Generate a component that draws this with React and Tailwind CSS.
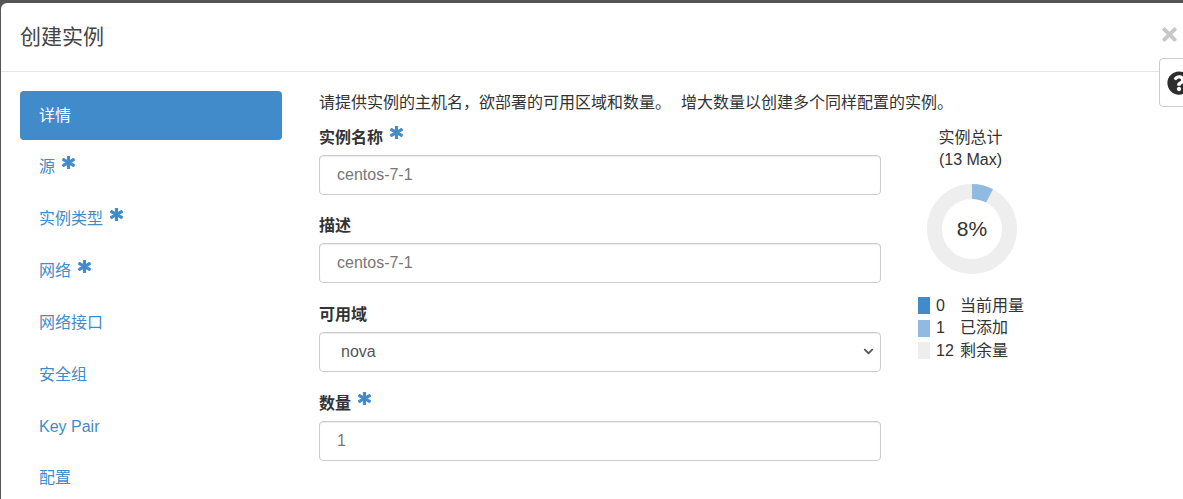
import React from "react";
import { FaAsterisk, FaTimes, FaQuestionCircle, FaChevronDown } from "react-icons/fa";

const font = "font-['Liberation_Sans','Noto_Sans_CJK_SC',sans-serif]";

const navItems = [
  { label: "详情", active: true },
  { label: "源", required: true },
  { label: "实例类型", required: true },
  { label: "网络", required: true },
  { label: "网络接口" },
  { label: "安全组" },
  { label: "Key Pair" },
  { label: "配置" },
];

function Star({ className }) {
  return (
    <FaAsterisk
      stroke="currentColor"
      strokeWidth={40}
      className={`inline-block text-[#428bca] text-[13px] ${className}`}
    />
  );
}

function Field({ label, required, value, select }) {
  return (
    <div className="mb-[19.7px]">
      <div className="h-[24px] mb-[5px] flex items-center gap-[6.5px] text-[16px] font-bold text-[#333] leading-[24px]">
        <span>{label}</span>
        {required && <Star className="-mt-[10px]" />}
      </div>
      <div
        className={`h-[40px] w-[562px] border border-[#ccc] rounded-[4px] bg-white flex items-center justify-between text-[16px] shadow-[inset_0_1px_1px_rgba(0,0,0,0.075)] ${select ? "pl-[21px] pr-[5px] text-[#555]" : "pl-[17px] text-[#777]"}`}
      >
        <span className={select ? "pt-[1px]" : ""}>{value}</span>
        {select && <FaChevronDown className="text-[#555] text-[11px] mr-[1px]" />}
      </div>
    </div>
  );
}

function Legend({ color, count, label }) {
  return (
    <div className="flex items-center h-[22.5px] text-[16px] text-[#333]">
      <span className={`w-[12px] h-[17px] ${color}`} />
      <span className="w-[24px] ml-[6px]">{count}</span>
      <span>{label}</span>
    </div>
  );
}

export default function App() {
  return (
    <div className={`h-[499px] w-[1183px] overflow-hidden bg-[#555] pt-[3px] pl-[1px] ${font}`}>
      <div className="relative h-[496px] bg-white rounded-tl-[6px]">
        <div className="h-[69px] border-b border-[#e5e5e5] pl-[19px] pt-[19px] text-[21px] leading-[30px] text-[#444]">
          创建实例
        </div>
        <FaTimes className="absolute right-[3px] top-[21px] text-[#c8c8c8] text-[21px]" />
        <div className="absolute left-[1158px] top-[55px] w-[40px] h-[49px] bg-white border border-[#ccc] rounded-[4px] flex items-center pl-[7px]">
          <FaQuestionCircle className="text-[#2d2d2d] text-[24px] shrink-0" />
        </div>

        <div className="flex pl-[19px] pt-[19px]">
          <nav className="w-[262px] flex flex-col gap-[2.85px] text-[16px] shrink-0">
            {navItems.map((item) => (
              <div
                key={item.label}
                className={`h-[49px] rounded-[4px] pl-[19px] flex items-center gap-[6.5px] ${item.active ? "bg-[#428bca] text-white" : "text-[#428bca]"}`}
              >
                <span>{item.label}</span>
                {item.required && <Star className="-mt-[9px]" />}
              </div>
            ))}
          </nav>

          <div className="ml-[37px] w-[840px]">
            <p className="text-[16px] leading-[24px] text-[#333] mb-[10.6px] whitespace-nowrap [word-spacing:5.5px]">
              请提供实例的主机名，欲部署的可用区域和数量。 增大数量以创建多个同样配置的实例。
            </p>
            <div className="flex">
              <div className="w-[562px]">
                <Field label="实例名称" required value="centos-7-1" />
                <Field label="描述" value="centos-7-1" />
                <Field label="可用域" value="nova" select />
                <Field label="数量" required value="1" />
              </div>
              <div className="ml-[37px] w-[120px]">
                <div className="w-[105px] text-center text-[16px] leading-[22px] text-[#333] mt-[1px]">
                  <div>实例总计</div>
                  <div>(13 Max)</div>
                </div>
                <div className="relative w-[90px] h-[90px] ml-[9px] mt-[13px]">
                  <svg viewBox="0 0 90 90" className="w-[90px] h-[90px]">
                    <circle cx="45" cy="45" r="37.5" fill="none" stroke="#eeeeee" strokeWidth="15" />
                    <path d="M45 0 A45 45 0 0 1 66 5.2 L59 18.5 A30 30 0 0 0 45 15 Z" fill="#90bae0" />
                  </svg>
                  <span className="absolute inset-0 flex items-center justify-center text-[21px] text-[#333]">8%</span>
                </div>
                <div className="mt-[21px]">
                  <Legend color="bg-[#428bca]" count="0" label="当前用量" />
                  <Legend color="bg-[#90bae0]" count="1" label="已添加" />
                  <Legend color="bg-[#eeeeee]" count="12" label="剩余量" />
                </div>
              </div>
            </div>
          </div>
        </div>
      </div>
    </div>
  );
}
